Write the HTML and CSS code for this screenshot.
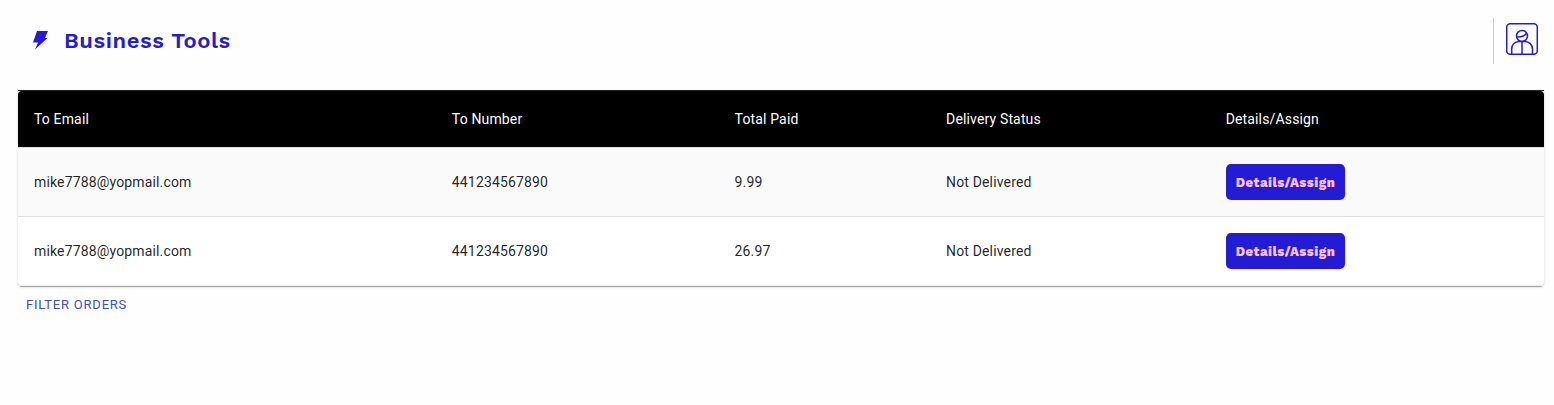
FILE: index.html
```html
<!DOCTYPE html>
<html lang="en">
<head>
    <meta charset="UTF-8">
    <meta name="viewport" content="width=device-width, initial-scale=1.0">
    <title>Business Tools</title>
    <link rel="stylesheet" href="styles.css">
</head>
<body>
    <header class="topbar">
        <h1 class="brand">
            <svg class="bolt" width="16" height="20" viewBox="0 0 16 20" aria-hidden="true">
                <path d="M5 0H16L13 7H15.5L3 18.5L6 11.5H1Z" fill="#241cd4"/>
            </svg>
            Business Tools
        </h1>
        <div class="account">
            <button class="profile" type="button" aria-label="Profile">
                <svg width="32" height="32" viewBox="0 0 32 32" fill="none" stroke="#241cd4" stroke-width="1.5">
                    <rect x="0.7" y="0.7" width="30.6" height="30.6" rx="3.5"/>
                    <circle cx="16" cy="13" r="5.5"/>
                    <path d="M10.6 14C15 14.3 18.5 13.5 20.5 10.2M5.7 31V26C5.7 21.5 9 18.6 13 18.4H19C23 18.6 26.5 21.5 26.5 26V31M16 18.4V31"/>
                </svg>
            </button>
        </div>
    </header>

    <main class="content">
        <div class="paper">
            <table class="orders">
                <thead>
                    <tr>
                        <th>To Email</th>
                        <th>To Number</th>
                        <th>Total Paid</th>
                        <th>Delivery Status</th>
                        <th>Details/Assign</th>
                    </tr>
                </thead>
                <tbody>
                    <tr>
                        <td>mike7788@yopmail.com</td>
                        <td>441234567890</td>
                        <td>9.99</td>
                        <td>Not Delivered</td>
                        <td><button class="details" type="button">Details/Assign</button></td>
                    </tr>
                    <tr>
                        <td>mike7788@yopmail.com</td>
                        <td>441234567890</td>
                        <td>26.97</td>
                        <td>Not Delivered</td>
                        <td><button class="details" type="button">Details/Assign</button></td>
                    </tr>
                </tbody>
            </table>
        </div>
        <button class="filter" type="button">Filter Orders</button>
    </main>
</body>
</html>
```

FILE: styles.css
```css
* {
    box-sizing: border-box;
}
body {
    margin: 0;
    background-color: #fefefe;
    font-family: Roboto, "Liberation Sans", sans-serif;
    font-size: 14px;
    color: rgba(0, 0, 0, 0.87);
}
button {
    border: none;
    cursor: pointer;
}
.topbar {
    display: flex;
    justify-content: space-between;
    align-items: center;
    padding: 18px 16px 26px 32px;
}
.brand {
    display: flex;
    align-items: center;
    gap: 16px;
    margin: 0;
    font-family: "Work Sans", Inter, sans-serif;
    font-size: 22px;
    font-weight: 600;
    line-height: 46px;
    letter-spacing: 0.025em;
    color: #241cd4;
}
.account {
    display: flex;
    height: 46px;
    padding: 5px 0 0 12px;
    border-left: 1px solid #ccc;
}
.profile {
    width: 32px;
    height: 32px;
    padding: 0;
    background: none;
}
.content {
    padding: 0 10px 0 18px;
}
.paper {
    border-top: 1px solid #1b1f22;
    border-radius: 0 0 4px 4px;
    background: #fff;
    box-shadow: 0 2px 1px -1px rgba(0, 0, 0, 0.2), 0 1px 1px 0 rgba(0, 0, 0, 0.14), 0 1px 3px 0 rgba(0, 0, 0, 0.12);
}
.orders {
    width: 100%;
    border-collapse: separate;
    border-spacing: 0;
    line-height: 20px;
    letter-spacing: 0.01071em;
}
.orders th,
.orders td {
    padding: 16px;
    border-bottom: 1px solid #e0e0e0;
    text-align: left;
}
.orders th {
    background: #000;
    color: #fff;
    font-weight: 400;
    line-height: 24px;
}
.orders th:first-child {
    border-top-left-radius: 4px;
}
.orders th:last-child {
    border-top-right-radius: 4px;
}
.orders tbody tr:nth-child(odd) {
    background: #fafafa;
}
.orders tbody tr:last-child td {
    border-bottom-color: #eee;
}
.details {
    display: block;
    height: 36px;
    padding: 0 10px;
    border-radius: 5px;
    background: #241cd4;
    color: #ffc0e0;
    font-family: "Work Sans", Inter, sans-serif;
    font-size: 13px;
    font-weight: 800;
    letter-spacing: 0.04em;
}
.filter {
    padding: 4px 8px;
    background: none;
    color: #3f51b5;
    font-family: inherit;
    font-size: 13px;
    line-height: 30px;
    letter-spacing: 0.06em;
    text-transform: uppercase;
}
```
